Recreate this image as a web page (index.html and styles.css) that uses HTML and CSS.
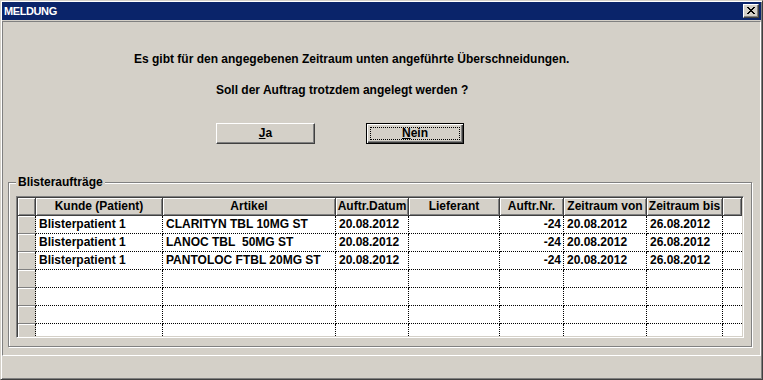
FILE: index.html
```html
<!DOCTYPE html>
<html lang="de">
<head>
  <meta charset="UTF-8">
  <title>Meldung</title>
  <link rel="stylesheet" href="styles.css">
</head>
<body>
  <div class="window">
    <div class="titlebar">
      <span class="title">MELDUNG</span>
      <span class="close-btn">
        <svg width="8" height="7" viewBox="0 0 8 7"><path d="M0 0h2v1h1v1h2v-1h1v-1h2v1h-1v1h-1v1h-1v1h1v1h1v1h1v1h-2v-1h-1v-1h-2v1h-1v1h-2v-1h1v-1h1v-1h1v-1h-1v-1h-1v-1h-1z" fill="#000"/></svg>
      </span>
    </div>

    <div class="panel">
      <p class="msg msg-first">Es gibt für den angegebenen Zeitraum unten angeführte Überschneidungen.</p>
      <p class="msg msg-second">Soll der Auftrag trotzdem angelegt werden ?</p>

      <div class="actions">
        <span class="btn btn-ja"><u>J</u>a</span>
        <span class="btn btn-default"><span class="focus-rect"><u>N</u>ein</span></span>
      </div>

      <fieldset class="group">
        <legend>Blisteraufträge</legend>
        <div class="grid">
          <div class="hd"></div>
          <div class="hd">Kunde (Patient)</div>
          <div class="hd">Artikel</div>
          <div class="hd">Auftr.Datum</div>
          <div class="hd">Lieferant</div>
          <div class="hd">Auftr.Nr.</div>
          <div class="hd">Zeitraum von</div>
          <div class="hd">Zeitraum bis</div>
          <div class="hd"></div>

          <div class="ind"></div>
          <div class="cell">Blisterpatient 1</div>
          <div class="cell">CLARITYN TBL 10MG ST</div>
          <div class="cell">20.08.2012</div>
          <div class="cell"></div>
          <div class="cell num">-24</div>
          <div class="cell">20.08.2012</div>
          <div class="cell">26.08.2012</div>
          <div class="cell last"></div>

          <div class="ind"></div>
          <div class="cell">Blisterpatient 1</div>
          <div class="cell">LANOC TBL&nbsp; 50MG ST</div>
          <div class="cell">20.08.2012</div>
          <div class="cell"></div>
          <div class="cell num">-24</div>
          <div class="cell">20.08.2012</div>
          <div class="cell">26.08.2012</div>
          <div class="cell last"></div>

          <div class="ind"></div>
          <div class="cell">Blisterpatient 1</div>
          <div class="cell">PANTOLOC FTBL 20MG ST</div>
          <div class="cell">20.08.2012</div>
          <div class="cell"></div>
          <div class="cell num">-24</div>
          <div class="cell">20.08.2012</div>
          <div class="cell">26.08.2012</div>
          <div class="cell last"></div>

          <div class="ind"></div>
          <div class="cell"></div><div class="cell"></div><div class="cell"></div><div class="cell"></div>
          <div class="cell"></div><div class="cell"></div><div class="cell"></div><div class="cell last"></div>

          <div class="ind"></div>
          <div class="cell"></div><div class="cell"></div><div class="cell"></div><div class="cell"></div>
          <div class="cell"></div><div class="cell"></div><div class="cell"></div><div class="cell last"></div>

          <div class="ind"></div>
          <div class="cell"></div><div class="cell"></div><div class="cell"></div><div class="cell"></div>
          <div class="cell"></div><div class="cell"></div><div class="cell"></div><div class="cell last"></div>

          <div class="ind"></div>
          <div class="cell"></div><div class="cell"></div><div class="cell"></div><div class="cell"></div>
          <div class="cell"></div><div class="cell"></div><div class="cell"></div><div class="cell last"></div>
        </div>
      </fieldset>
    </div>

    <div class="statusbar"></div>
  </div>
</body>
</html>
```

FILE: styles.css
```css
* {
  box-sizing: border-box;
}

body {
  margin: 0;
  background: #d4d0c8;
  font-family: 'Liberation Sans', Arial, sans-serif;
  font-size: 12px;
  font-weight: bold;
  color: #000;
}

.window {
  width: 763px;
  height: 380px;
  padding: 1px;
  background: #d4d0c8;
  border: 1px solid;
  border-color: #d4d0c8 #404040 #404040 #d4d0c8;
  box-shadow: inset 1px 1px #fff, inset -1px -1px #808080;
  display: flex;
  flex-direction: column;
}

.titlebar {
  height: 18px;
  margin-bottom: 1px;
  background: #0a246a;
  color: #fff;
  display: flex;
  align-items: center;
  justify-content: space-between;
  padding: 0 2px 0 2px;
}

.title {
  font-size: 11px;
  letter-spacing: -0.4px;
  line-height: 18px;
}

.close-btn {
  width: 16px;
  height: 14px;
  background: #d4d0c8;
  border: 1px solid;
  border-color: #fff #404040 #404040 #fff;
  box-shadow: inset -1px -1px #808080;
  display: flex;
  align-items: center;
  justify-content: center;
  padding: 0 1px 1px 0;
}

.panel {
  height: 335px;
  border: 1px solid;
  border-color: #808080 #fff #fff #808080;
}

.msg {
  margin: 0;
  line-height: 13px;
  white-space: nowrap;
}

.msg-first {
  margin-top: 31px;
  padding-left: 131px;
}

.msg-second {
  margin-top: 18px;
  padding-left: 213px;
}

.actions {
  display: flex;
  gap: 51px;
  margin-top: 26px;
  padding-left: 213px;
}

.btn {
  width: 98px;
  height: 21px;
  display: flex;
  align-items: center;
  justify-content: center;
  border: 1px solid;
  border-color: #fff #404040 #404040 #fff;
  box-shadow: inset -1px -1px #808080;
  line-height: 13px;
}

.btn-ja {
  width: 99px;
}

.btn-default {
  border: 1px solid #000;
  box-shadow: inset 1px 1px #fff, inset -1px -1px #404040, inset -2px -2px #808080;
  padding: 3px;
}

.focus-rect {
  width: 100%;
  height: 100%;
  border: 1px dotted #000;
  display: flex;
  align-items: center;
  justify-content: center;
}

.group {
  margin: 32px 8px 0 5px;
  padding: 7px 4px 8px 7px;
  border: 1px solid #808080;
  box-shadow: inset 1px 1px #fff, 1px 1px #fff;
}

.group legend {
  padding: 0 2px;
  line-height: 13px;
  background: #d4d0c8;
}

.grid {
  width: 728px;
  height: 142px;
  padding: 1px;
  overflow: hidden;
  background: #fff;
  border: 1px solid;
  border-color: #808080 #fff #fff #808080;
  box-shadow: inset 1px 1px #404040, inset -1px -1px #d4d0c8;
  display: grid;
  grid-template-columns: 18px 127px 173px 73px 91px 64px 83px 76px 19px;
  grid-auto-rows: 18px;
}

.hd {
  background: #d4d0c8;
  border-right: 1px solid #404040;
  border-bottom: 1px solid #404040;
  box-shadow: inset 1px 1px #fff, inset -1px -1px #808080;
  text-align: center;
  line-height: 17px;
  white-space: nowrap;
  overflow: hidden;
}

.hd:last-child {
  border-right: none;
}

.ind {
  background: #d4d0c8;
  border-right: 1px dotted #000;
  border-bottom: 1px solid #808080;
  box-shadow: inset 1px 1px #fff;
}

.cell {
  border-right: 1px dotted #000;
  border-bottom: 1px dotted #000;
  padding: 0 2px 0 3px;
  line-height: 17px;
  white-space: nowrap;
  overflow: hidden;
}

.cell.last {
  border-right: none;
}

.num {
  text-align: right;
}

.statusbar {
  flex: 1;
}
```
